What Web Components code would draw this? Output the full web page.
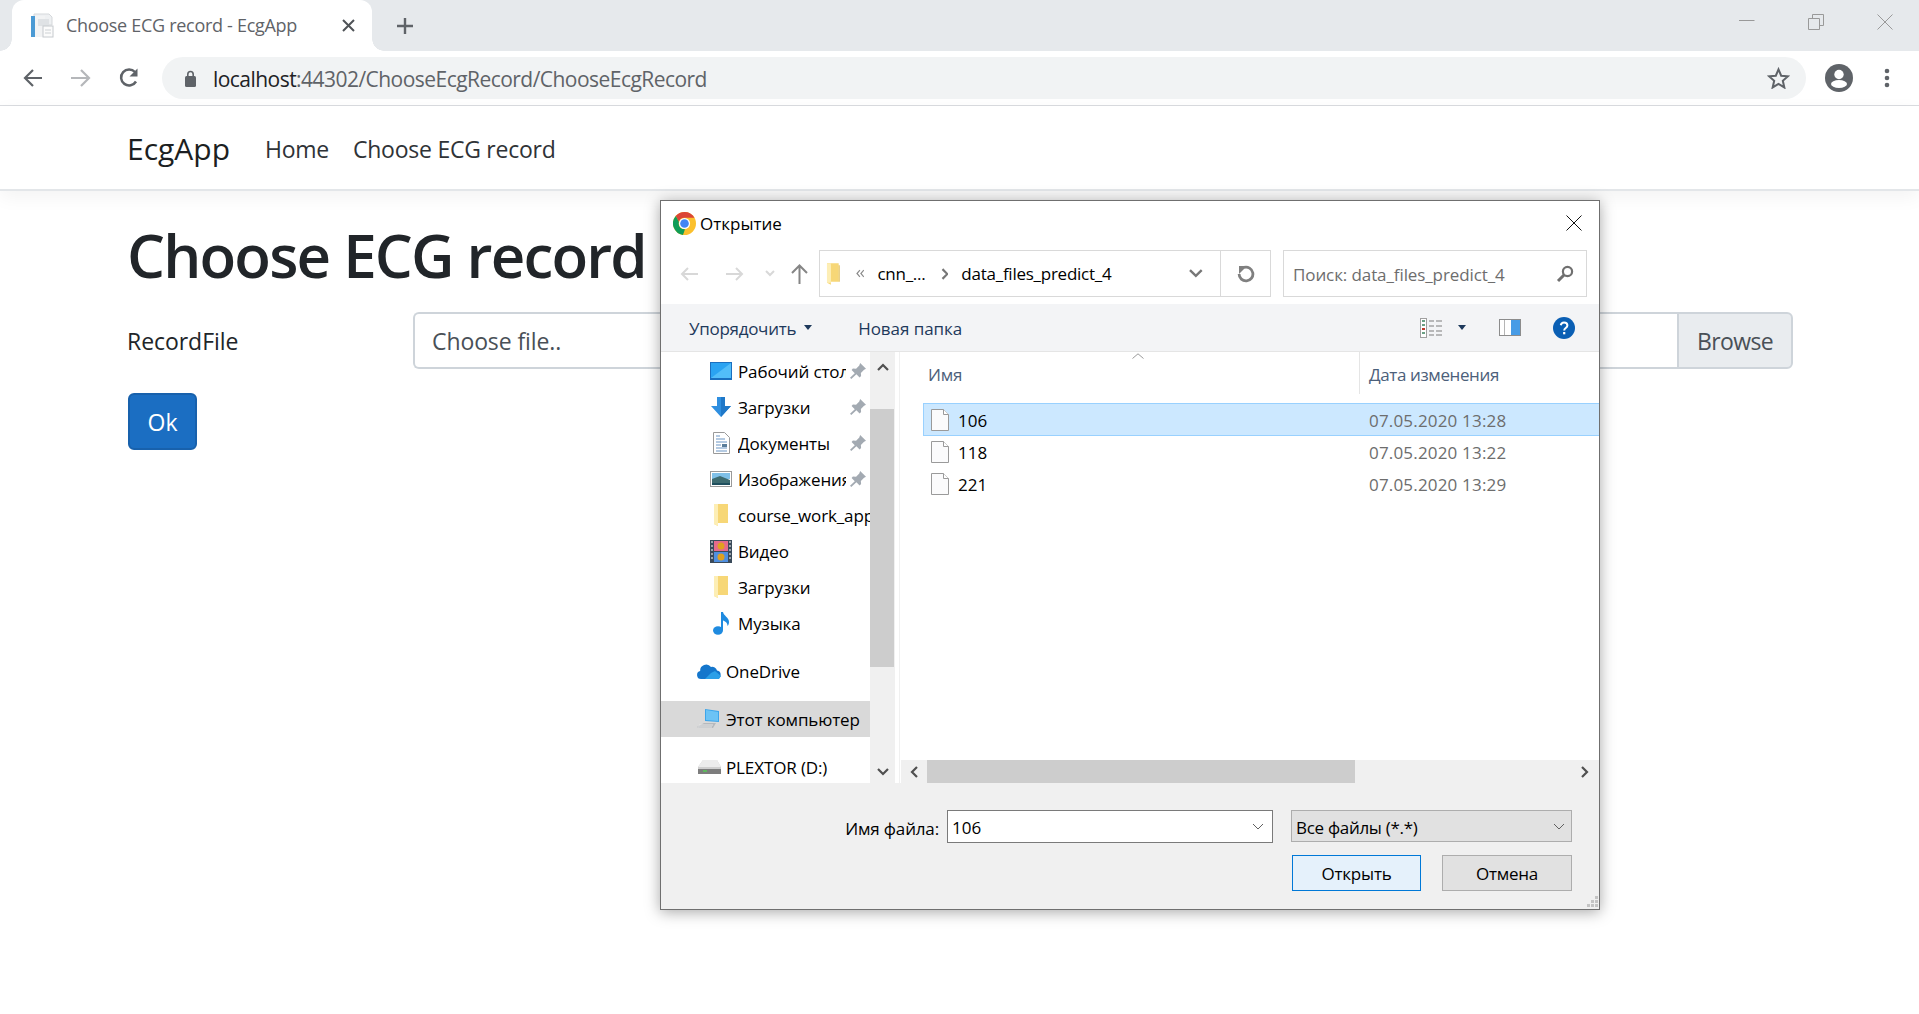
<!DOCTYPE html>
<html lang="ru">
<head>
<meta charset="utf-8">
<title>Choose ECG record - EcgApp</title>
<style>
  html, body { margin: 0; height: 100%; background: #fff; overflow: hidden; }
  body { font-family: "Open Sans", "Noto Sans", sans-serif; color: #212529; }
  svg { display: block; }
</style>
</head>
<body>

<template id="browser-chrome">
  <style>
    :host { display: block; font-family: "Open Sans", "Noto Sans", sans-serif; }
    .strip { display: flex; align-items: stretch; height: 51px; background: #e6e9ec; padding-left: 12px; box-sizing: border-box; }
    .tab { position: relative; display: flex; align-items: center; width: 360px; background: #fff; border-radius: 12px 12px 0 0; box-sizing: border-box; padding-left: 18px; }
    .tab::before, .tab::after { content: ""; position: absolute; bottom: 0; width: 12px; height: 12px; }
    .tab::before { left: -12px; background: radial-gradient(circle at 0 0, transparent 11.5px, #fff 12px); }
    .tab::after { right: -12px; background: radial-gradient(circle at 100% 0, transparent 11.5px, #fff 12px); }
    .tab-title { margin-left: 12px; padding-bottom: 2px; width: 276px; font-size: 18px; letter-spacing: -.3px; color: #5f6368; white-space: nowrap; }
    .plus { align-self: center; margin-left: 24px; }
    .winctl { margin-left: auto; display: flex; align-items: flex-start; gap: 53px; padding: 14px 26px 0 0; }
    .toolbar { display: flex; align-items: center; height: 55px; box-sizing: border-box; padding: 6px 0 6px 23px; background: #fff; border-bottom: 1px solid #dadce0; }
    .omnibox { display: flex; align-items: center; flex: 1; height: 42px; margin-left: 22px; padding: 0 16px 0 23px; background: #f1f3f4; border-radius: 21px; }
    .url { margin-left: 17px; padding-top: 2px; font-size: 21px; letter-spacing: -.54px; color: #5f6368; white-space: nowrap; }
    .url b { font-weight: 400; color: #202124; }
    .star { margin-left: auto; }
    .avatar { margin-left: 19px; }
    .dots { margin: 0 29px 0 31px; }
  </style>
  <div class="strip">
    <div class="tab">
      <svg width="24" height="25" viewBox="0 0 24 25"><path d="M4 1h15l3 3v8H4z" fill="#eef0f2" stroke="#d5d8db"/><rect x="1" y="3" width="4" height="21" fill="#4b9ad4"/><rect x="5" y="3" width="10" height="21" fill="#f2f3f4"/><rect x="8" y="6" width="11" height="7" fill="#dfe2e5"/><rect x="13" y="13" width="10" height="11" fill="#fbfbfb" stroke="#c6cace"/><path d="M15 17h6M15 20h6" stroke="#cdd1d4"/></svg>
      <span class="tab-title"><slot name="tab"></slot></span>
      <svg width="13" height="13" viewBox="0 0 13 13"><path d="M1 1l11 11M12 1L1 12" stroke="#4f5357" stroke-width="2"/></svg>
    </div>
    <svg class="plus" width="18" height="18" viewBox="0 0 18 18"><path d="M9 1v16M1 9h16" stroke="#5f6368" stroke-width="2.4"/></svg>
    <div class="winctl">
      <svg width="16" height="12" viewBox="0 0 16 12"><path d="M0 6.5h15.5" stroke="#999"/></svg>
      <svg width="16" height="16" viewBox="0 0 16 16"><path d="M.5 4.5h11v11H.5zM4.5 4V.5h11v11H12" fill="none" stroke="#999"/></svg>
      <svg width="16" height="16" viewBox="0 0 16 16"><path d="M.5.5l15 15M15.5.5l-15 15" stroke="#999"/></svg>
    </div>
  </div>
  <div class="toolbar">
    <svg width="20" height="20" viewBox="0 0 20 20"><path d="M19 10H3M10 2l-8 8 8 8" fill="none" stroke="#5f6368" stroke-width="2.2"/></svg>
    <svg style="margin-left:27px" width="22" height="20" viewBox="0 0 22 20"><path d="M1 10h17M11 2l8 8-8 8" fill="none" stroke="#b5b7ba" stroke-width="2.2"/></svg>
    <svg style="margin-left:26px" width="22" height="22" viewBox="0 0 22 22"><path d="M18 14.500A8 8 0 1 1 17 5" fill="none" stroke="#5f6368" stroke-width="2.500"/><path d="M19.500 1.500v8h-8z" fill="#5f6368"/></svg>
    <div class="omnibox">
      <svg width="11" height="17" viewBox="0 0 11 17"><path d="M2.8 7V4.2a2.7 2.7 0 0 1 5.4 0V7" fill="none" stroke="#5f6368" stroke-width="1.6"/><rect y="6" width="11" height="11" rx="1.5" fill="#5f6368"/></svg>
      <span class="url"><b>localhost</b>:44302/ChooseEcgRecord/ChooseEcgRecord</span>
      <svg class="star" width="23" height="22" viewBox="0 0 24 23"><path d="M12 2.5l2.8 6.6 7.1.6-5.4 4.7 1.6 7-6.1-3.7-6.1 3.7 1.6-7-5.4-4.7 7.1-.6z" fill="none" stroke="#5f6368" stroke-width="2.1"/></svg>
    </div>
    <svg class="avatar" width="28" height="28" viewBox="0 0 28 28"><circle cx="14" cy="14" r="14" fill="#5f6368"/><circle cx="14" cy="10.5" r="4.7" fill="#fff"/><ellipse cx="14" cy="20" rx="8" ry="4" fill="#fff"/></svg>
    <svg class="dots" width="6" height="20" viewBox="0 0 6 20"><circle cx="3" cy="3" r="2.3" fill="#5f6368"/><circle cx="3" cy="10" r="2.3" fill="#5f6368"/><circle cx="3" cy="17" r="2.3" fill="#5f6368"/></svg>
  </div>
</template>

<template id="app-navbar">
  <style>
    :host { display: flex; align-items: center; height: 85px; box-sizing: border-box; padding: 2px 0 0 127px; background: #fff; border-bottom: 2px solid #e3e6e9; box-shadow: 0 6px 18px rgba(0,0,0,.05); font-family: "Open Sans", "Noto Sans", sans-serif; }
    .brand { font-size: 30px; color: #1c1f22; }
    nav { display: flex; gap: 24px; margin-left: 35px; font-size: 23px; letter-spacing: -.25px; color: #2f3337; }
  </style>
  <span class="brand"><slot name="brand"></slot></span>
  <nav><slot></slot></nav>
</template>

<template id="record-form">
  <style>
    :host { display: block; padding: 0 126px 0 128px; font-family: "Open Sans", "Noto Sans", sans-serif; }
    h1 { margin: 0 0 0 -1px; height: 104px; padding-top: 24px; box-sizing: border-box; font-size: 60px; line-height: 80px; font-weight: 600; letter-spacing: -1.8px; color: #212529; white-space: nowrap; }
    .row { display: flex; align-items: center; margin-top: 17px; height: 57px; }
    label { width: 286px; margin-left: -1px; font-size: 23px; letter-spacing: -.05px; color: #212529; }
    .group { display: flex; flex: 1; height: 57px; font-size: 23px; color: #495057; }
    .file { flex: 1; display: flex; align-items: center; padding-left: 17px; border: 2px solid #ced4da; border-right: 0; border-radius: 6px 0 0 6px; letter-spacing: -.1px; }
    .browse { display: flex; align-items: center; justify-content: center; width: 116px; background: #e9ecef; border: 2px solid #ced4da; border-radius: 0 6px 6px 0; box-sizing: border-box; letter-spacing: -.6px; }
    .ok { display: flex; align-items: center; justify-content: center; width: 69px; height: 57px; margin-top: 24px; box-sizing: border-box; background: #1b6ec2; border: 2px solid #1861ac; border-radius: 6px; color: #fff; font-size: 23px; }
  </style>
  <h1><slot name="title"></slot></h1>
  <div class="row">
    <label><slot name="label"></slot></label>
    <div class="group">
      <div class="file"><slot name="placeholder"></slot></div>
      <div class="browse"><slot name="browse"></slot></div>
    </div>
  </div>
  <div class="ok"><slot name="ok"></slot></div>
</template>

<template id="nav-row">
  <style>
    :host { display: flex; align-items: center; height: 36px; padding-left: 49px; font-size: 17px; letter-spacing: -.12px; color: #000; white-space: nowrap; overflow: hidden; }
    :host([drive]) { padding-left: 36px; }
    :host([active]) { background: #d9d9d9; }
    :host([pinned]) { padding-right: 4px; }
    .icon { flex: none; display: flex; justify-content: center; align-items: center; width: 22px; margin-right: 6px; }
    :host([drive]) .icon { width: 24px; margin-right: 5px; }
    .label { flex: 1; min-width: 0; overflow: hidden; }
    .pin { display: none; flex: none; margin-left: 4px; }
    :host([pinned]) .pin { display: block; }
  </style>
  <span class="icon"><slot name="icon"></slot></span>
  <span class="label"><slot></slot></span>
  <svg class="pin" width="16" height="16" viewBox="0 0 15 15"><path d="M9.500 0l5.500 5.500-1.800.8-3 3 .2 3-1.400 1.200-3-3L1.200 15 0 13.800l4.500-4.200-3-3 1.200-1.400 3 .2 3-3z" fill="#a3aab2"/></svg>
</template>

<template id="file-row">
  <style>
    :host { display: grid; grid-template-columns: 445px 1fr; align-items: center; height: 33px; margin: 0 0 -1px 23px; box-sizing: border-box; border: 1px solid transparent; border-right: 0; font-size: 17px; color: #000; }
    :host([selected]) { background: #cce8ff; border-color: #99d1ff; }
    .name { display: flex; align-items: center; gap: 9px; padding-left: 7px; }
    .name slot, .date { position: relative; }
    .date { color: #6d6d6d; letter-spacing: .18px; padding-top: 1px; }
    .label { padding-top: 1px; }
  </style>
  <div class="name">
    <svg width="18" height="22" viewBox="0 0 18 22"><path d="M.5.5h12l5 5v16H.5z" fill="#fbfbfc" stroke="#9a9a9a"/><path d="M12.500.5v5h5" fill="#fff" stroke="#9a9a9a"/></svg>
    <span class="label"><slot></slot></span>
  </div>
  <div class="date"><slot name="date"></slot></div>
</template>

<template id="open-dialog">
  <style>
    :host { position: absolute; left: 660px; top: 200px; width: 940px; height: 710px; box-sizing: border-box; display: flex; flex-direction: column; background: #fff; border: 1px solid #6f6f6f; box-shadow: 0 2px 14px rgba(0,0,0,.35); font-family: "Open Sans", "Noto Sans", sans-serif; font-size: 17px; color: #000; }
    .titlebar { display: flex; align-items: center; height: 49px; flex: none; box-sizing: border-box; padding: 0 17px 5px 12px; }
    .titlebar span { margin-left: 4px; letter-spacing: 0; }
    .titlebar .x { margin-left: auto; }
    .addr { display: flex; align-items: center; height: 47px; flex: none; padding: 0 12px 0 18px; }
    .field { display: flex; align-items: center; height: 47px; box-sizing: border-box; border: 1px solid #d9d9d9; background: #fff; }
    .crumbs { width: 452px; margin-left: 11px; padding-left: 6px; }
    .crumbs span { letter-spacing: -.25px; white-space: nowrap; }
    .crumbs .sep { width: 50px; height: 100%; border-left: 1px solid #d9d9d9; display: flex; align-items: center; justify-content: center; }
    .search { width: 304px; margin-left: 12px; padding: 2px 12px 0 9px; color: #6d6d6d; letter-spacing: -.1px; white-space: nowrap; }
    .search svg { margin-left: auto; margin-top: -2px; }
    .commands { display: flex; align-items: center; height: 48px; flex: none; box-sizing: border-box; margin-top: 7px; padding-left: 28px; background: #f3f4f6; border-bottom: 1px solid #e5e5e5; color: #1e395b; letter-spacing: -.28px; white-space: nowrap; }
    .commands .text { padding-top: 2px; }
    .main { flex: 1; display: flex; min-height: 0; }
    .tree { width: 209px; flex: none; padding-top: 1px; box-sizing: border-box; overflow: hidden; }
    ::slotted(.gap) { margin-top: 12px; }
    .vbar { width: 25px; flex: none; display: flex; flex-direction: column; background: #f0f0f0; }
    .vbar .btn { flex: none; height: 40px; display: flex; justify-content: center; padding-top: 11px; box-sizing: border-box; }
    .vbar .thumb { height: 258px; flex: none; margin: 17px 1px 0 0; background: #cdcdcd; }
    .vbar .end { margin-top: auto; padding-top: 25px; }
    .list { flex: 1; min-width: 0; display: flex; flex-direction: column; margin-left: 4px; border-left: 1px solid #f0f0f0; position: relative; }
    .head { display: grid; grid-template-columns: 460px 1fr; height: 42px; flex: none; margin-bottom: 9px; color: #4c607a; }
    .head div { display: flex; align-items: center; padding-top: 2px; box-sizing: border-box; }
    .head div:first-child { padding-left: 28px; border-right: 1px solid #e5e5e5; letter-spacing: -.2px; }
    .head div:last-child { padding-left: 9px; letter-spacing: -.38px; }
    .sort { position: absolute; left: 232px; top: 1px; }
    .hbar { margin-top: auto; flex: none; height: 23px; display: flex; align-items: center; background: #f0f0f0; margin-left: 1px; }
    .hbar .b { width: 26px; flex: none; display: flex; justify-content: center; }
    .hbar .thumb { width: 428px; height: 23px; background: #cdcdcd; }
    .hbar .b:last-child { margin-left: auto; margin-right: 1px; }
    .footer { position: relative; flex: none; height: 126px; box-sizing: border-box; padding: 27px 27px 0 0; background: #f0f0f0; }
    .line { display: flex; justify-content: flex-end; align-items: flex-start; }
    .line label { line-height: 33px; padding-top: 2px; margin-right: 8px; letter-spacing: -.15px; }
    .combo { display: flex; align-items: center; justify-content: space-between; height: 33px; box-sizing: border-box; padding: 2px 8px 0 4px; border: 1px solid #7a7a7a; background: #fff; width: 326px; }
    .combo.type { width: 281px; height: 32px; margin-left: 18px; padding-right: 6px; background: #e1e1e1; border-color: #adadad; letter-spacing: -.3px; }
    .combo svg { margin-top: -2px; }
    .buttons { margin-top: 10px; gap: 21px; }
    .buttons div { display: flex; align-items: center; justify-content: center; width: 130px; height: 36px; box-sizing: border-box; background: #e1e1e1; border: 1px solid #adadad; letter-spacing: -.2px; }
    .buttons .primary { width: 129px; background: #e5f1fb; border: 1px solid #0078d7; }
    .grip { position: absolute; right: 1px; bottom: 1px; }
  </style>
  <div class="titlebar">
    <svg width="23" height="23" viewBox="0 0 24 24"><circle cx="12" cy="12" r="12" fill="#fbc02d"/><path d="M12 0a12 12 0 0 1 10.4 6H12a6 6 0 0 0-5.8 4.4L2.9 4.200A12 12 0 0 1 12 0z" fill="#db4437"/><path d="M2.900 4.200L6.200 10.400A6 6 0 0 0 12.500 18L10.400 23.900A12 12 0 0 1 2.900 4.200z" fill="#0f9d58"/><circle cx="12" cy="12" r="5.800" fill="#fff"/><circle cx="12" cy="12" r="4.500" fill="#4285f4"/></svg>
    <span><slot name="title"></slot></span>
    <svg class="x" width="16" height="16" viewBox="0 0 16 16"><path d="M.5.5l15 15M15.500.5l-15 15" stroke="#111"/></svg>
  </div>
  <div class="addr">
    <svg width="20" height="18" viewBox="0 0 20 18"><path d="M19 9H3M9 3L3 9l6 6" fill="none" stroke="#d8d8d8" stroke-width="2"/></svg>
    <svg style="margin-left:26px" width="20" height="18" viewBox="0 0 20 18"><path d="M1 9h16M11 3l6 6-6 6" fill="none" stroke="#d8d8d8" stroke-width="2"/></svg>
    <svg style="margin-left:20px" width="10" height="7" viewBox="0 0 10 7"><path d="M1 1l4 4 4-4" fill="none" stroke="#d8d8d8" stroke-width="2"/></svg>
    <svg style="margin-left:16px" width="17" height="20" viewBox="0 0 17 20"><path d="M8.500 20V2M1 9l7.500-7.500L16 9" fill="none" stroke="#858585" stroke-width="2"/></svg>
    <div class="field crumbs">
      <svg width="15" height="24" viewBox="0 0 15 24"><path d="M1 1h12v19H5v3l-4-2z" fill="#f7d777"/><path d="M5 20V3H1" fill="#fbe8a8"/><path d="M1 1h4v20l-4 0z" fill="#fdeeb5"/><path d="M13 3h1v17h-1z" fill="#e0b84a"/></svg>
      <svg style="margin-left:15px" width="9" height="9" viewBox="0 0 9 9"><path d="M4 1L1 4.500 4 8M8 1L5 4.500 8 8" fill="none" stroke="#8a8a8a" stroke-width="1.200"/></svg>
      <span style="margin-left:13px">cnn_...</span>
      <svg style="margin-left:15px" width="8" height="12" viewBox="0 0 8 12"><path d="M1.500 1l5 5-5 5" fill="none" stroke="#777" stroke-width="2.200"/></svg>
      <span style="margin-left:13px"><slot name="folder"></slot></span>
      <svg style="margin-left:78px" width="14" height="9" viewBox="0 0 14 9"><path d="M1 1l6 6 6-6" fill="none" stroke="#777" stroke-width="2.400"/></svg>
      <div class="sep" style="margin-left:17px"><svg width="18" height="18" viewBox="0 0 18 18"><path d="M7 2.400A6.900 6.900 0 1 1 2.100 9" fill="none" stroke="#808080" stroke-width="2.800"/><path d="M2 1h8L2 9z" fill="#808080"/></svg></div>
    </div>
    <div class="field search">
      <slot name="search"></slot>
      <svg width="18" height="18" viewBox="0 0 18 18"><circle cx="11.500" cy="6.500" r="4.600" fill="none" stroke="#707070" stroke-width="2.200"/><path d="M8 10l-6 6" stroke="#707070" stroke-width="3"/></svg>
    </div>
  </div>
  <div class="commands">
    <span class="text"><slot name="organize"></slot></span>
    <svg style="margin-left:8px" width="8" height="5" viewBox="0 0 8 5"><path d="M0 0h8L4 5z" fill="#1e395b"/></svg>
    <span class="text" style="margin-left:46px;letter-spacing:-.05px"><slot name="newfolder"></slot></span>
    <svg style="margin-left:auto" width="23" height="20" viewBox="0 0 23 20"><rect x=".5" y=".5" width="6" height="19" fill="#fff" stroke="#a0a0a0"/><path d="M2 3h3M2 7h3M2 11h3M2 15h3" stroke="#6aa084" stroke-width="2"/><path d="M2 11h3" stroke="#c0392b" stroke-width="2"/><path d="M9 3h5M16 3h6M9 8h5M16 8h6M9 13h5M16 13h6M9 17h5M16 17h6" stroke="#7c7c7c"/></svg>
    <svg style="margin-left:15px" width="8" height="5" viewBox="0 0 8 5"><path d="M0 0h8L4 5z" fill="#1e395b"/></svg>
    <svg style="margin-left:33px" width="22" height="17" viewBox="0 0 22 17"><rect x=".5" y=".5" width="21" height="16" fill="#fff" stroke="#8c8c8c"/><path d="M5.500 1v15" stroke="#b5b5b5"/><rect x="12" y="1" width="9" height="15" fill="#479ce6"/></svg>
    <svg style="margin-left:32px;margin-right:24px" width="22" height="22" viewBox="0 0 22 22"><circle cx="11" cy="11" r="11" fill="#0a5fb4"/><path d="M7.800 8.200A3.300 3.300 0 0 1 11 5.500c2 0 3.400 1.200 3.400 2.900 0 2.600-3.200 2.600-3.200 5" fill="none" stroke="#fff" stroke-width="2"/><rect x="10.100" y="15" width="2.200" height="2.300" fill="#fff"/></svg>
  </div>
  <div class="main">
    <div class="tree"><slot name="tree"></slot></div>
    <div class="vbar">
      <div class="btn"><svg width="12" height="8" viewBox="0 0 12 8"><path d="M1 7l5-5 5 5" fill="none" stroke="#505050" stroke-width="2.200"/></svg></div>
      <div class="thumb"></div>
      <div class="btn end"><svg width="12" height="8" viewBox="0 0 12 8"><path d="M1 1l5 5 5-5" fill="none" stroke="#505050" stroke-width="2.200"/></svg></div>
    </div>
    <div class="list">
      <svg class="sort" width="12" height="6" viewBox="0 0 12 6"><path d="M.5 5.500L6 .8l5.500 4.700" fill="none" stroke="#9a9a9a"/></svg>
      <div class="head"><div><slot name="col-name"></slot></div><div><slot name="col-date"></slot></div></div>
      <slot name="files"></slot>
      <div class="hbar">
        <div class="b"><svg width="8" height="12" viewBox="0 0 8 12"><path d="M7 1L2 6l5 5" fill="none" stroke="#505050" stroke-width="2.200"/></svg></div>
        <div class="thumb"></div>
        <div class="b"><svg width="8" height="12" viewBox="0 0 8 12"><path d="M1 1l5 5-5 5" fill="none" stroke="#505050" stroke-width="2.200"/></svg></div>
      </div>
    </div>
  </div>
  <div class="footer">
    <div class="line">
      <label><slot name="file-label"></slot></label>
      <div class="combo"><slot name="file-name"></slot><svg width="12" height="7" viewBox="0 0 12 7"><path d="M1 1l5 5 5-5" fill="none" stroke="#606060"/></svg></div>
      <div class="combo type"><slot name="file-type"></slot><svg width="12" height="7" viewBox="0 0 12 7"><path d="M1 1l5 5 5-5" fill="none" stroke="#606060"/></svg></div>
    </div>
    <div class="line buttons">
      <div class="primary"><slot name="open"></slot></div>
      <div><slot name="cancel"></slot></div>
    </div>
    <svg class="grip" width="12" height="12" viewBox="0 0 12 12"><path d="M9 0h3v3H9zM5 4h3v3H5zM9 4h3v3H9zM1 8h3v3H1zM5 8h3v3H5zM9 8h3v3H9z" fill="#c4c4c4"/></svg>
  </div>
</template>

<browser-chrome>
  <span slot="tab">Choose ECG record - EcgApp</span>
</browser-chrome>

<app-navbar>
  <span slot="brand">EcgApp</span>
  <span>Home</span>
  <span>Choose ECG record</span>
</app-navbar>

<record-form>
  <span slot="title">Choose ECG record</span>
  <span slot="label">RecordFile</span>
  <span slot="placeholder">Choose file..</span>
  <span slot="browse">Browse</span>
  <span slot="ok">Ok</span>
</record-form>

<open-dialog>
  <span slot="title">Открытие</span>
  <span slot="folder">data_files_predict_4</span>
  <span slot="search">Поиск: data_files_predict_4</span>
  <span slot="organize">Упорядочить</span>
  <span slot="newfolder">Новая папка</span>
  <span slot="col-name">Имя</span>
  <span slot="col-date">Дата изменения</span>

  <nav-row slot="tree" pinned>
    <svg slot="icon" width="22" height="18" viewBox="0 0 22 18"><rect width="22" height="18" fill="#1a6fc0"/><rect x="1" y="1" width="20" height="15" fill="#2aa3f2"/><path d="M1 16L21 1v15z" fill="#52bdf9"/></svg>
    Рабочий стол
  </nav-row>
  <nav-row slot="tree" pinned>
    <svg slot="icon" width="20" height="20" viewBox="0 0 20 20"><path d="M6 0h8v9h6l-10 11L0 9h6z" fill="#2f8fe0"/><path d="M10 0h4v9h6L10 20z" fill="#1f78c8"/></svg>
    Загрузки
  </nav-row>
  <nav-row slot="tree" pinned>
    <svg slot="icon" width="17" height="22" viewBox="0 0 17 22"><path d="M.5.500h11l5 5v16H.5z" fill="#fff" stroke="#9a9a9a"/><path d="M3 4h4M3 7h9M3 10h11M3 13h5M3 16h11M3 19h11" stroke="#6a95c4"/><rect x="9" y="12" width="5" height="3" fill="#5a7d9a"/></svg>
    Документы
  </nav-row>
  <nav-row slot="tree" pinned>
    <svg slot="icon" width="22" height="16" viewBox="0 0 22 16"><rect x=".5" y=".5" width="21" height="15" fill="#fff" stroke="#9a9a9a"/><rect x="2" y="2" width="18" height="6" fill="#7fc0e8"/><path d="M2 8l8-3 10 4v5H2z" fill="#3d6b70"/><path d="M2 12h18v2H2z" fill="#1f4f5e"/></svg>
    Изображения
  </nav-row>
  <nav-row slot="tree">
    <svg slot="icon" width="15" height="22" viewBox="0 0 15 22"><path d="M0 0h14v19H4v3l-4-2z" fill="#f7d777"/><path d="M0 0h4v22l-4-2z" fill="#fdeeb5"/></svg>
    course_work_app
  </nav-row>
  <nav-row slot="tree">
    <svg slot="icon" width="22" height="23" viewBox="0 0 22 23"><rect width="22" height="23" fill="#3a4a5a"/><rect x="4" y="1" width="14" height="10" fill="#e66a8c"/><rect x="4" y="12" width="14" height="10" fill="#4f8fe0"/><circle cx="11" cy="6" r="3.500" fill="#e0a020"/><circle cx="11" cy="17" r="3.500" fill="#e0a020"/><path d="M1 2h2M1 6h2M1 10h2M1 14h2M1 18h2M19 2h2M19 6h2M19 10h2M19 14h2M19 18h2" stroke="#fff"/></svg>
    Видео
  </nav-row>
  <nav-row slot="tree">
    <svg slot="icon" width="15" height="22" viewBox="0 0 15 22"><path d="M0 0h14v19H4v3l-4-2z" fill="#f7d777"/><path d="M0 0h4v22l-4-2z" fill="#fdeeb5"/></svg>
    Загрузки
  </nav-row>
  <nav-row slot="tree">
    <svg slot="icon" width="17" height="23" viewBox="0 0 17 23"><ellipse cx="5" cy="18.500" rx="5" ry="4.200" fill="#1f8be0"/><path d="M8 18V0h2c.5 4 6 5 6 10 0 1.500-.5 3-1.500 4 .3-3-2.500-5-4.500-5.500V18z" fill="#1f8be0"/></svg>
    Музыка
  </nav-row>
  <nav-row slot="tree" drive class="gap">
    <svg slot="icon" width="24" height="16" viewBox="0 0 24 16"><path d="M4 16a4 4 0 0 1-.8-7.900A6 6 0 0 1 14 4a5 5 0 0 1 6 3.500A4.300 4.300 0 0 1 20 16z" fill="#1476cc"/><path d="M8 16l6-6 4-2 6 5-2 3z" fill="#2b9fe8"/></svg>
    OneDrive
  </nav-row>
  <nav-row slot="tree" drive active class="gap">
    <svg slot="icon" width="24" height="20" viewBox="0 0 24 20"><path d="M8 0l14 2v11L8 12z" fill="#3da5ea"/><path d="M9 1l12 2v9L9 11z" fill="#6cc3f5"/><path d="M0 18l7-4h12l-3 5H2z" fill="#b5b9bd"/><path d="M2 16h14M1 18h14" stroke="#e6e6e6"/></svg>
    Этот компьютер
  </nav-row>
  <nav-row slot="tree" drive class="gap">
    <svg slot="icon" width="23" height="14" viewBox="0 0 23 14"><path d="M5 0h14l4 7v7H0V7z" fill="#cfcfcf"/><path d="M0 9h23v5H0z" fill="#7d7d7d"/><rect x="5" y="10" width="4" height="2" fill="#5fb85f"/><path d="M5 0h14l4 7H0z" fill="#ececec"/></svg>
    PLEXTOR (D:)
  </nav-row>

  <file-row slot="files" selected>106<span slot="date">07.05.2020 13:28</span></file-row>
  <file-row slot="files">118<span slot="date">07.05.2020 13:22</span></file-row>
  <file-row slot="files">221<span slot="date">07.05.2020 13:29</span></file-row>

  <span slot="file-label">Имя файла:</span>
  <span slot="file-name">106</span>
  <span slot="file-type">Все файлы (*.*)</span>
  <span slot="open">Открыть</span>
  <span slot="cancel">Отмена</span>
</open-dialog>

<script>
  /**
   * Base class: clones the template named after the tag into an open shadow root.
   */
  class TemplateElement extends HTMLElement {
    constructor() {
      super();
      this.attachShadow({ mode: "open" });
      const template = document.getElementById(this.localName).content;
      this.shadowRoot.appendChild(template.cloneNode(true));
    }
  }

  class BrowserChrome extends TemplateElement {}
  class AppNavbar extends TemplateElement {}
  class RecordForm extends TemplateElement {}
  class NavRow extends TemplateElement {}
  class FileRow extends TemplateElement {}
  class OpenDialog extends TemplateElement {}

  customElements.define('browser-chrome', BrowserChrome);
  customElements.define('app-navbar', AppNavbar);
  customElements.define('record-form', RecordForm);
  customElements.define('nav-row', NavRow);
  customElements.define('file-row', FileRow);
  customElements.define('open-dialog', OpenDialog);
</script>
</body>
</html>
